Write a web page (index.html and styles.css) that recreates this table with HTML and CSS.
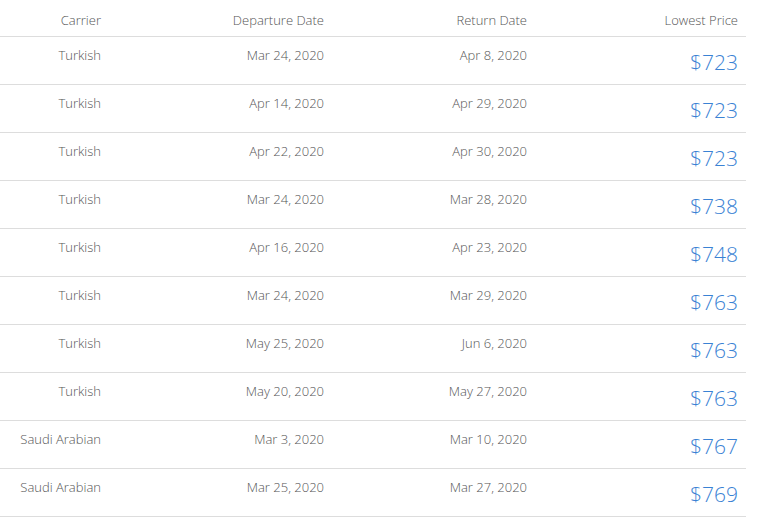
FILE: index.html
```html
<!DOCTYPE html>
<html>
<head>
<meta charset="utf-8">
<link rel="stylesheet" href="styles.css">
</head>
<body>
<div class="table">
  <div class="row head">
    <div class="cell">Carrier</div>
    <div class="cell">Departure Date</div>
    <div class="cell">Return Date</div>
    <div class="cell">Lowest Price</div>
  </div>
  <div class="row"><div class="cell">Turkish</div><div class="cell">Mar 24, 2020</div><div class="cell">Apr 8, 2020</div><div class="cell price">$723</div></div>
  <div class="row"><div class="cell">Turkish</div><div class="cell">Apr 14, 2020</div><div class="cell">Apr 29, 2020</div><div class="cell price">$723</div></div>
  <div class="row"><div class="cell">Turkish</div><div class="cell">Apr 22, 2020</div><div class="cell">Apr 30, 2020</div><div class="cell price">$723</div></div>
  <div class="row"><div class="cell">Turkish</div><div class="cell">Mar 24, 2020</div><div class="cell">Mar 28, 2020</div><div class="cell price">$738</div></div>
  <div class="row"><div class="cell">Turkish</div><div class="cell">Apr 16, 2020</div><div class="cell">Apr 23, 2020</div><div class="cell price">$748</div></div>
  <div class="row"><div class="cell">Turkish</div><div class="cell">Mar 24, 2020</div><div class="cell">Mar 29, 2020</div><div class="cell price">$763</div></div>
  <div class="row"><div class="cell">Turkish</div><div class="cell">May 25, 2020</div><div class="cell">Jun 6, 2020</div><div class="cell price">$763</div></div>
  <div class="row"><div class="cell">Turkish</div><div class="cell">May 20, 2020</div><div class="cell">May 27, 2020</div><div class="cell price">$763</div></div>
  <div class="row"><div class="cell">Saudi Arabian</div><div class="cell">Mar 3, 2020</div><div class="cell">Mar 10, 2020</div><div class="cell price">$767</div></div>
  <div class="row"><div class="cell">Saudi Arabian</div><div class="cell">Mar 25, 2020</div><div class="cell">Mar 27, 2020</div><div class="cell price">$769</div></div>
</div>
</body>
</html>
```
FILE: styles.css
```css
html, body {
  margin: 0;
  padding: 0;
  background: #fff;
}
body {
  font-family: "Open Sans", "Noto Sans", sans-serif;
  font-weight: 300;
  font-size: 13px;
  color: #555;
}
.table {
  width: 746px;
}
.row {
  display: grid;
  grid-template-columns: 109px 223px 203px 211px;
  height: 47px;
  border-bottom: 1px solid #ddd;
}
.row.head {
  height: 36px;
}
.cell {
  text-align: right;
  padding-right: 8px;
  padding-top: 9px;
  line-height: 18px;
}
.head .cell {
  padding-top: 11px;
}
.price {
  font-size: 21px;
  line-height: 28px;
  padding-top: 11px;
  color: #3a82d4;
}
```
